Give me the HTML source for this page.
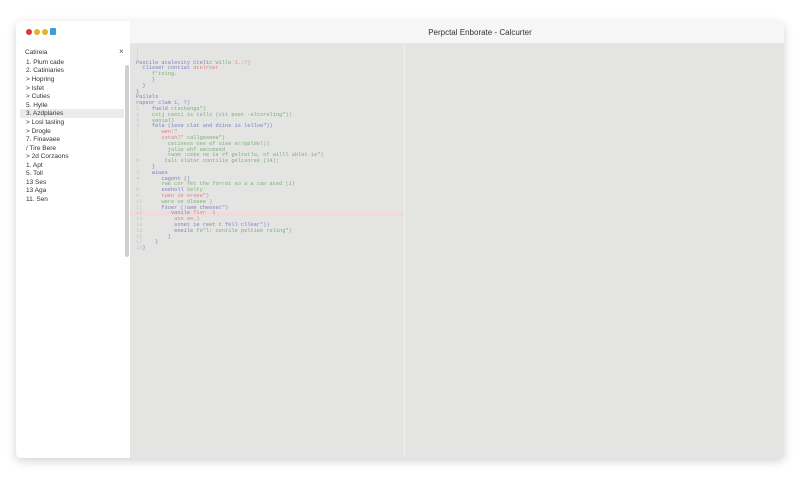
<!DOCTYPE html>
<html><head><meta charset="utf-8"><style>
*{margin:0;padding:0;box-sizing:border-box}
body{width:800px;height:480px;background:#fff;position:relative;overflow:hidden;font-family:"Liberation Sans",sans-serif}
.win{position:absolute;left:16px;top:21px;width:768px;height:437px;background:#e4e4e3;border-radius:5px;box-shadow:0 3px 10px rgba(0,0,0,.18);overflow:hidden}
.title{position:absolute;left:0;top:0;width:768px;height:23px;background:#f6f6f6;border-bottom:1px solid #e6e6e6}
.title .t{position:absolute;left:0;right:-160px;top:7px;text-align:center;font-size:8px;color:#333}
.side{position:absolute;left:0;top:0;width:114px;height:437px;background:#fff}
.dot{position:absolute;top:8px;width:6px;height:6px;border-radius:50%}
.sb{position:absolute;left:109px;top:44px;width:4px;height:192px;background:#d0d0d0;border-radius:2px}
.item{position:absolute;left:10px;font-size:6.5px;color:#333;white-space:nowrap}
.sel{position:absolute;left:4px;top:88px;width:104px;height:9px;background:#ebebeb}
.div{position:absolute;left:388px;top:23px;width:1px;height:414px;background:#efefef}
.code{position:absolute;font-family:"Liberation Mono",monospace;font-size:5.3px;white-space:pre;color:#6a6fc0;opacity:.85}
.g{color:#6aaa65}.r{color:#e07070}.n{color:#c0c0c0}
.hl{position:absolute;left:114px;top:191px;width:274px;height:4px;background:#f0dada}
</style></head><body>
<div class="win">
<div class="title"><div class="t">Perpctal Enborate - Calcurter</div></div>
<div class="side">
<div class="dot" style="left:10px;background:#d83b3b"></div>
<div class="dot" style="left:18px;background:#e8b030"></div>
<div class="dot" style="left:26px;background:#e8b030"></div>
<div style="position:absolute;left:34px;top:7px;width:6px;height:7px;background:#3aa0d8;border-radius:1px"></div>
<div class="item" style="left:9px;top:28px">Catireia</div>
<div style="position:absolute;left:103px;top:26px;font-size:8px;color:#555">×</div>
<div class="sel"></div>
<div class="sb"></div>
<div class="item" style="top:38px">1. Plum cade</div>
<div class="item" style="top:46px">2. Catiniaries</div>
<div class="item" style="top:55px">&gt; Hopring</div>
<div class="item" style="top:64px">&gt; Isfet</div>
<div class="item" style="top:72px">&gt; Cuties</div>
<div class="item" style="top:81px">5. Hylle</div>
<div class="item" style="top:89px">3. Azdplaries</div>
<div class="item" style="top:98px">&gt; Losl tasling</div>
<div class="item" style="top:107px">&gt; Drogle</div>
<div class="item" style="top:115px">7. Finavaee</div>
<div class="item" style="top:124px">/ Tire Bere</div>
<div class="item" style="top:132px">&gt; 2d Corzaons</div>
<div class="item" style="top:141px">1. Apt</div>
<div class="item" style="top:149px">5. Toll</div>
<div class="item" style="top:158px">13 Ses</div>
<div class="item" style="top:166px">13 Aga</div>
<div class="item" style="top:175px">11. Sen</div>
</div>
<div class="div"></div>
<div class="hl"></div>
<div class="code" style="left:120px;top:28px;line-height:5.8px"><span class="n">¦
¦</span>
Pastile atalevity Ctelic <span class="g">Wille</span> <span class="r">1.;?)</span>
  Clisser contiat <span class="r">atelrner</span>
     <span class="g">f'tsing.</span>
     }
  }
}
Pailels
rapeor clam 1, ?)
<span class="n">1</span>    fueld <span class="g">ctsckenga")</span>
<span class="n">2</span>    <span class="g">cxtj ceeti is tellz (vit poet -eltoreling"))</span>
<span class="n">3</span>    <span class="g">senial)</span>
<span class="n">4</span>    fela (iene clat and diine is lelloe"))
<span class="n">|</span>       <span class="r">wen:"</span>
<span class="n">|</span>       <span class="r">cstahl"</span> <span class="g">callgeeeee")</span>
<span class="n">:</span>         <span class="g">cetiness oee ef uise er/ppldel))</span>
<span class="n">:</span>         <span class="g">jalie ehf aeccmeed</span>
<span class="n">:</span>         <span class="g">twom :ceke ne ie #f geltetlu, of willl ablet ie")</span>
<span class="n">8</span>        <span class="g">Cali slatar contilie gelisoree (14);</span>
<span class="n">:</span>    }
<span class="n">3</span>    wiwes
<span class="n">4</span>       cagont ()
<span class="n">:</span>       <span class="g">rwe cor fet the forrat so a a can ated (1)</span>
<span class="n">8</span>       eoeholl <span class="g">Selty</span>
<span class="n">9</span>       <span class="r">twen ie ereee")</span>
<span class="n">10</span>      <span class="g">were oe dleeee )</span>
<span class="n">11</span>      fsoer (!aem cheeset")
<span class="n">12</span>         vanile <span class="r">fisr  1</span>
<span class="n">13</span>          <span class="r">aon ee.)</span>
<span class="n">14</span>          sonet ie reet t fell cllear"))
<span class="n">15</span>          eneile <span class="g">fe"l: centile peltiee reling")</span>
<span class="n">16</span>        }
<span class="n">17</span>    }
<span class="n">18</span>}</div>
</div>
</body></html>
